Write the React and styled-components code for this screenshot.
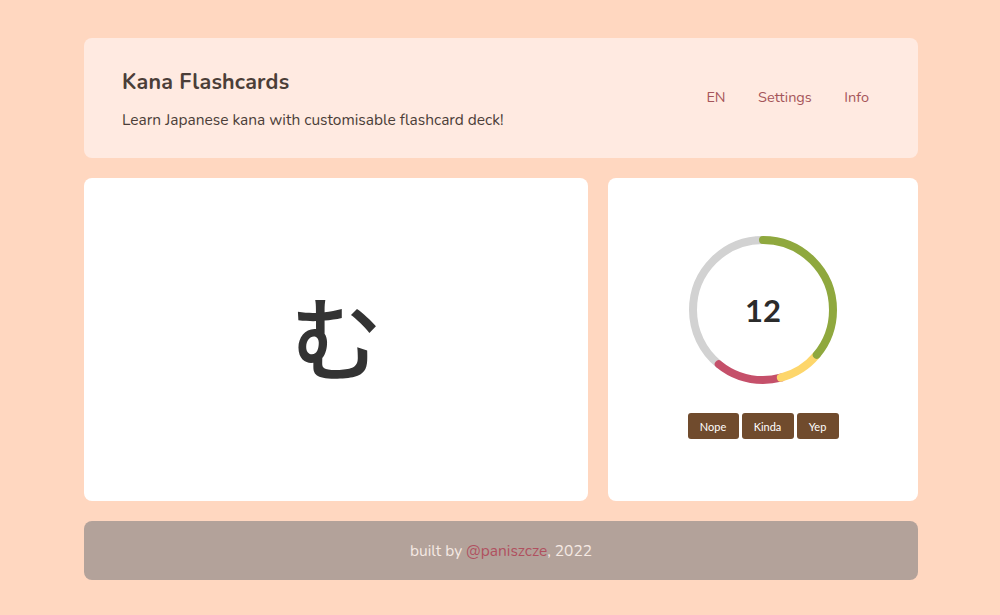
import React from 'react'
import styled, { createGlobalStyle } from 'styled-components'

const GlobalStyle = createGlobalStyle`
  html, body {
    margin: 0;
    padding: 0;
    background: #ffd7c0;
    font-family: "Nunito", "Lato", "Noto Sans", sans-serif;
  }
`

const Page = styled.div`
  width: 834px;
  margin: 0 auto;
  padding: 38px 0 0 2px;
  display: flex;
  flex-direction: column;
  gap: 20px;
`

const Header = styled.header`
  height: 120px;
  box-sizing: border-box;
  background: #ffeae1;
  border-radius: 8px;
  padding: 0 49px 0 38px;
  display: flex;
  align-items: center;
  justify-content: space-between;
`

const TitleBlock = styled.div`
  display: flex;
  flex-direction: column;
  gap: 12px;
  color: #4b3e38;
  margin-top: 1px;
`

const Title = styled.h1`
  margin: 0;
  font-size: 21.5px;
  font-weight: 700;
  letter-spacing: 0.2px;
`

const Subtitle = styled.p`
  margin: 0;
  font-size: 15.5px;
`

const Nav = styled.nav`
  display: flex;
  gap: 32.5px;
  margin-top: -2px;
  a {
    color: #a5555a;
    text-decoration: none;
    font-size: 14.5px;
  }
`

const Main = styled.div`
  display: flex;
  gap: 20px;
  height: 323px;
`

const Card = styled.section`
  background: #fff;
  border-radius: 8px;
  width: ${p => p.$w}px;
  display: flex;
  flex-direction: column;
  align-items: center;
  justify-content: center;
`

const Kana = styled.div`
  font-family: "Noto Sans CJK JP", sans-serif;
  font-size: 92px;
  font-weight: 500;
  color: #333;
  line-height: 1;
  margin-top: -12px;
`

const Ring = styled.div`
  position: relative;
  width: 156px;
  height: 156px;
  margin-top: -8px;
`

const Count = styled.div`
  position: absolute;
  inset: 0;
  display: flex;
  align-items: center;
  justify-content: center;
  font-family: "Lato", sans-serif;
  font-weight: 700;
  font-size: 31px;
  color: #2b2b2b;
`

const Buttons = styled.div`
  display: flex;
  gap: 3px;
  margin-top: 25px;
`

const Btn = styled.button`
  width: ${p => p.$w}px;
  height: 26px;
  border: none;
  border-radius: 3px;
  background: #704b2d;
  color: #fff;
  font-family: "Lato", sans-serif;
  font-size: 11px;
  padding: 0;
`

const Footer = styled.footer`
  height: 59px;
  background: #b3a29a;
  border-radius: 8px;
  display: flex;
  align-items: center;
  justify-content: center;
  color: #f5e9e3;
  font-size: 15.5px;
  a {
    color: #b0505f;
    text-decoration: none;
  }
`

const segments = [
  { from: 0, to: 0.36, color: '#8fa83e' },
  { from: 0.36, to: 0.458, color: '#fdd66b' },
  { from: 0.458, to: 0.608, color: '#c5506a' },
  { from: 0.608, to: 1, color: '#d2d2d2' },
]

function Donut() {
  const r = 70
  const c = 2 * Math.PI * r
  const order = [3, 2, 1, 0]
  return (
    <svg width="156" height="156" viewBox="0 0 156 156">
      <g transform="rotate(-90 78 78)">
        {order.map(i => {
          const s = segments[i]
          const len = (s.to - s.from) * c
          return (
            <circle
              key={i}
              cx="78"
              cy="78"
              r={r}
              fill="none"
              stroke={s.color}
              strokeWidth="8"
              strokeLinecap="round"
              strokeDasharray={`${len} ${c}`}
              strokeDashoffset={-s.from * c}
            />
          )
        })}
      </g>
    </svg>
  )
}

export default function App() {
  return (
    <>
      <GlobalStyle />
      <Page>
        <Header>
          <TitleBlock>
            <Title>Kana Flashcards</Title>
            <Subtitle>Learn Japanese kana with customisable flashcard deck!</Subtitle>
          </TitleBlock>
          <Nav>
            <a href="#en">EN</a>
            <a href="#settings">Settings</a>
            <a href="#info">Info</a>
          </Nav>
        </Header>
        <Main>
          <Card $w={504}>
            <Kana>む</Kana>
          </Card>
          <Card $w={310}>
            <Ring>
              <Donut />
              <Count>12</Count>
            </Ring>
            <Buttons>
              <Btn $w={51}>Nope</Btn>
              <Btn $w={52}>Kinda</Btn>
              <Btn $w={42}>Yep</Btn>
            </Buttons>
          </Card>
        </Main>
        <Footer>
          <span>built by <a href="#gh">@paniszcze</a>, 2022</span>
        </Footer>
      </Page>
    </>
  )
}
